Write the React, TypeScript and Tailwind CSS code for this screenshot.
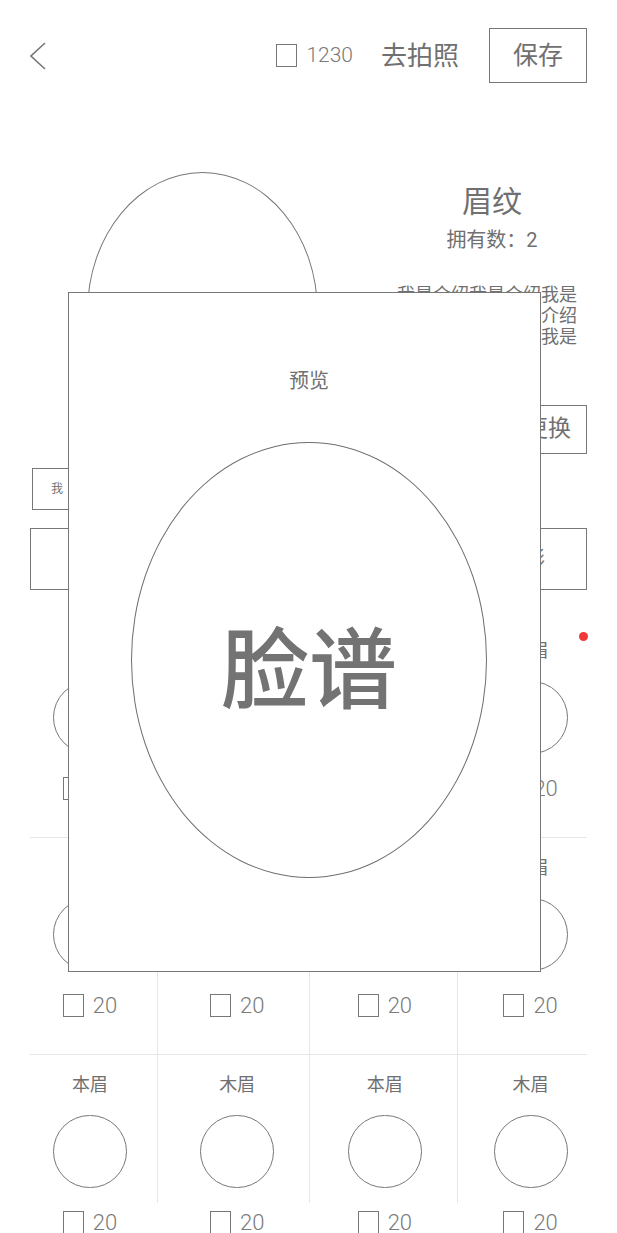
import React from "react";

const rows = [
  ["本眉", "木眉", "本眉", "木眉"],
  ["本眉", "木眉", "本眉", "木眉"],
  ["本眉", "木眉", "本眉", "木眉"],
];

// per-column widths and inner offsets so the content lines up with the dividers
const cols = [
  "w-[127px] pr-[7px]",
  "w-[153px] pl-[7px] border-l border-[#e6e6e6]",
  "w-[148px] pl-[2px] border-l border-[#e6e6e6]",
  "w-[130px] pl-[16px] border-l border-[#e6e6e6]",
];

function Check({ label }: { label: string }) {
  return (
    <div className="flex items-center gap-[9px]">
      <span className="block w-[21px] h-[23px] border-[1.5px] border-[#777]" />
      <span className="text-[22px] font-light leading-none text-[#7a7a7a]">{label}</span>
    </div>
  );
}

export default function App() {
  return (
    <div
      className="relative w-[617px] h-[1233px] overflow-hidden bg-white text-[#707070]"
      style={{ fontFamily: 'Roboto, "Noto Sans CJK SC", sans-serif' }}
    >
      {/* Header */}
      <div className="flex items-center justify-between h-[55px] mt-[28px] px-[30px]">
        <svg width="18" height="28" viewBox="0 0 18 28" fill="none" aria-hidden="true">
          <polyline points="15,1 1,14 15,27" stroke="#777" strokeWidth="1.6" strokeLinejoin="miter" />
        </svg>
        <div className="flex items-center">
          <div className="flex items-center gap-[9px]">
            <span className="block w-[21px] h-[23px] border-[1.5px] border-[#777]" />
            <span className="text-[21px] font-light leading-none text-[#7a7a7a]">1230</span>
          </div>
          <span className="ml-[28px] text-[26px] leading-none">去拍照</span>
          <div className="ml-[30px] w-[98px] h-[55px] border-[1.5px] border-[#777] flex items-center justify-center text-[25px]">
            保存
          </div>
        </div>
      </div>

      {/* Top section */}
      <div className="flex mt-[89px] h-[282px]">
        <div className="pl-[87px]">
          <div className="w-[231px] h-[280px] rounded-[50%] border-[1.5px] border-[#777]" />
        </div>
        <div className="ml-auto mr-[30px] w-[190px] flex flex-col items-center pt-[10px]">
          <div className="text-[30px] leading-[40px]">眉纹</div>
          <div className="mt-[4px] text-[20px] leading-[28px]">拥有数：2</div>
          <p className="mt-[30px] w-[180px] mr-[10px] text-[18px] leading-[21px] break-all">
            我是介绍我是介绍我是介绍我是介绍我是介绍我是介绍我是介绍我是
          </p>
          <div className="self-end mt-[58px] w-[80px] h-[49px] border-[1.5px] border-[#777] flex items-center justify-end pr-[15px] text-[23px]">
            更换
          </div>
        </div>
      </div>

      <div className="ml-[32px] mt-[14px] w-[110px] h-[42px] border-[1.5px] border-[#777] flex items-center pl-[18px] text-[12px] tracking-[6px]">
        我的眉形
      </div>

      <div className="flex justify-between mx-[30px] mt-[18px]">
        <div className="w-[170px] h-[62px] border-[1.5px] border-[#777]" />
        <div className="w-[190px] h-[62px] border-[1.5px] border-[#777] flex items-center justify-end pr-[41px] text-[20px]">
          更多眉形
        </div>
      </div>

      {/* Grid */}
      <div className="mx-[30px] mt-[31px]">
        {rows.map((row, r) => (
          <div key={r} className={`flex ${r < rows.length - 1 ? "border-b border-[#e6e6e6]" : ""}`}>
            {row.map((label, c) => (
              <div
                key={c}
                className={`${cols[c]} ${r < rows.length - 1 ? "h-[216px]" : "h-[148px]"} flex flex-col items-center`}
              >
                <div className="pt-[18px] text-[18px] leading-[24px]">{label}</div>
                <div className="mt-[18px] shrink-0 w-[74px] h-[73px] rounded-full border-[1.5px] border-[#777]" />
                <div className="mt-[23px] shrink-0">
                  <Check label="20" />
                </div>
              </div>
            ))}
          </div>
        ))}
      </div>

      {/* red badge */}
      <span className="absolute left-[579px] top-[632px] w-[9px] h-[9px] rounded-full bg-[#f03a3a]" />

      {/* Preview modal */}
      <div className="absolute left-[68px] top-[292px] w-[473px] h-[680px] border-[1.5px] border-[#777] bg-white flex flex-col items-center pl-[9px]">
        <div className="mt-[74px] text-[20px] leading-[28px]">预览</div>
        <div className="mt-[47px] w-[356px] h-[436px] rounded-[50%] border-[1.5px] border-[#6e6e6e] flex items-center justify-center pt-[22px]">
          <span className="text-[88px] leading-none font-medium text-[#737373]">脸谱</span>
        </div>
      </div>
    </div>
  );
}
